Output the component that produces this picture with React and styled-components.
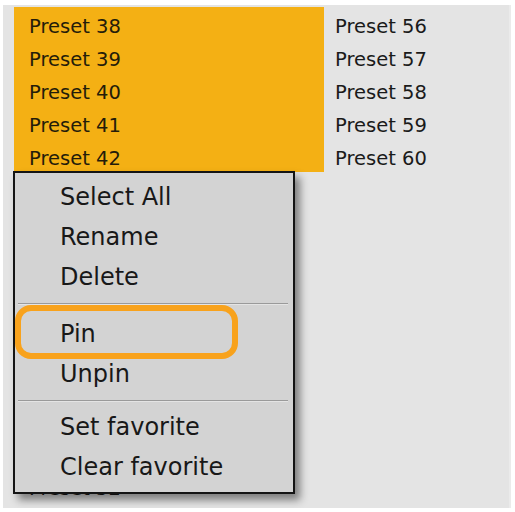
import React from 'react';
import styled, { createGlobalStyle } from 'styled-components';

const GlobalStyle = createGlobalStyle`
  html, body {
    margin: 0;
    padding: 0;
    background: #ffffff;
  }
  body {
    font-family: 'DejaVu Sans', 'Liberation Sans', sans-serif;
  }
`;

const Panel = styled.div`
  position: relative;
  box-sizing: border-box;
  width: 508px;
  height: 503px;
  margin: 5px 4px 4px 3px;
  background: #e4e4e4;
  border-right: 2px solid #ebebeb;
  overflow: hidden;
`;

const Columns = styled.div`
  display: flex;
  padding: 2px 0 0 11px;
`;

const Column = styled.div`
  display: flex;
  flex-direction: column;
  width: ${({ $width }) => $width || 'auto'};
`;

const Row = styled.div`
  box-sizing: border-box;
  height: 33px;
  padding: 7px 0 0 ${({ $inset }) => $inset}px;
  line-height: 26px;
  font-size: 19.5px;
  white-space: nowrap;
  color: ${({ $selected }) => ($selected ? '#241c0a' : '#1a1a1a')};
  background: ${({ $selected }) => ($selected ? '#f4b014' : 'transparent')};
`;

const Menu = styled.div`
  position: absolute;
  left: 10px;
  top: 166px;
  box-sizing: border-box;
  width: 282px;
  padding: 4px 0 5px;
  background: #d3d3d3;
  border: 2px solid #141414;
  box-shadow: 5px 6px 8px rgba(0, 0, 0, 0.45);
`;

const Item = styled.div`
  position: relative;
  height: 40px;
  line-height: 40px;
  padding-left: 45px;
  font-size: 24px;
  color: #181818;
  white-space: nowrap;
`;

const Ring = styled.div`
  position: absolute;
  left: 0;
  top: -9px;
  box-sizing: border-box;
  width: 223px;
  height: 54px;
  border: 6px solid #f8a21c;
  border-radius: 16px;
  pointer-events: none;
`;

const Separator = styled.div`
  height: 0;
  margin: 6px 5px ${({ $after }) => $after}px 3px;
  border-top: 1px solid #9a9a9a;
  border-bottom: 1px solid #e4e4e4;
`;

const leftRows = Array.from({ length: 15 }, (_, i) => 38 + i);
const rightRows = [56, 57, 58, 59, 60];
const selected = [38, 39, 40, 41, 42];

const menu = [
  { after: 0, items: ['Select All', 'Rename', 'Delete'] },
  { after: 9, items: ['Pin', 'Unpin'] },
  { after: 5, items: ['Set favorite', 'Clear favorite'] },
];

export default function App() {
  return (
    <>
      <GlobalStyle />
      <Panel>
        <Columns>
          <Column $width="310px">
            {leftRows.map((n) => (
              <Row key={n} $inset={15} $selected={selected.includes(n)}>
                Preset {n}
              </Row>
            ))}
          </Column>
          <Column>
            {rightRows.map((n) => (
              <Row key={n} $inset={11}>
                Preset {n}
              </Row>
            ))}
          </Column>
        </Columns>
        <Menu>
          {menu.map((group, gi) => (
            <React.Fragment key={gi}>
              {gi > 0 && <Separator $after={group.after} />}
              {group.items.map((label) => (
                <Item key={label}>
                  {label === 'Pin' && <Ring />}
                  {label}
                </Item>
              ))}
            </React.Fragment>
          ))}
        </Menu>
      </Panel>
    </>
  );
}
